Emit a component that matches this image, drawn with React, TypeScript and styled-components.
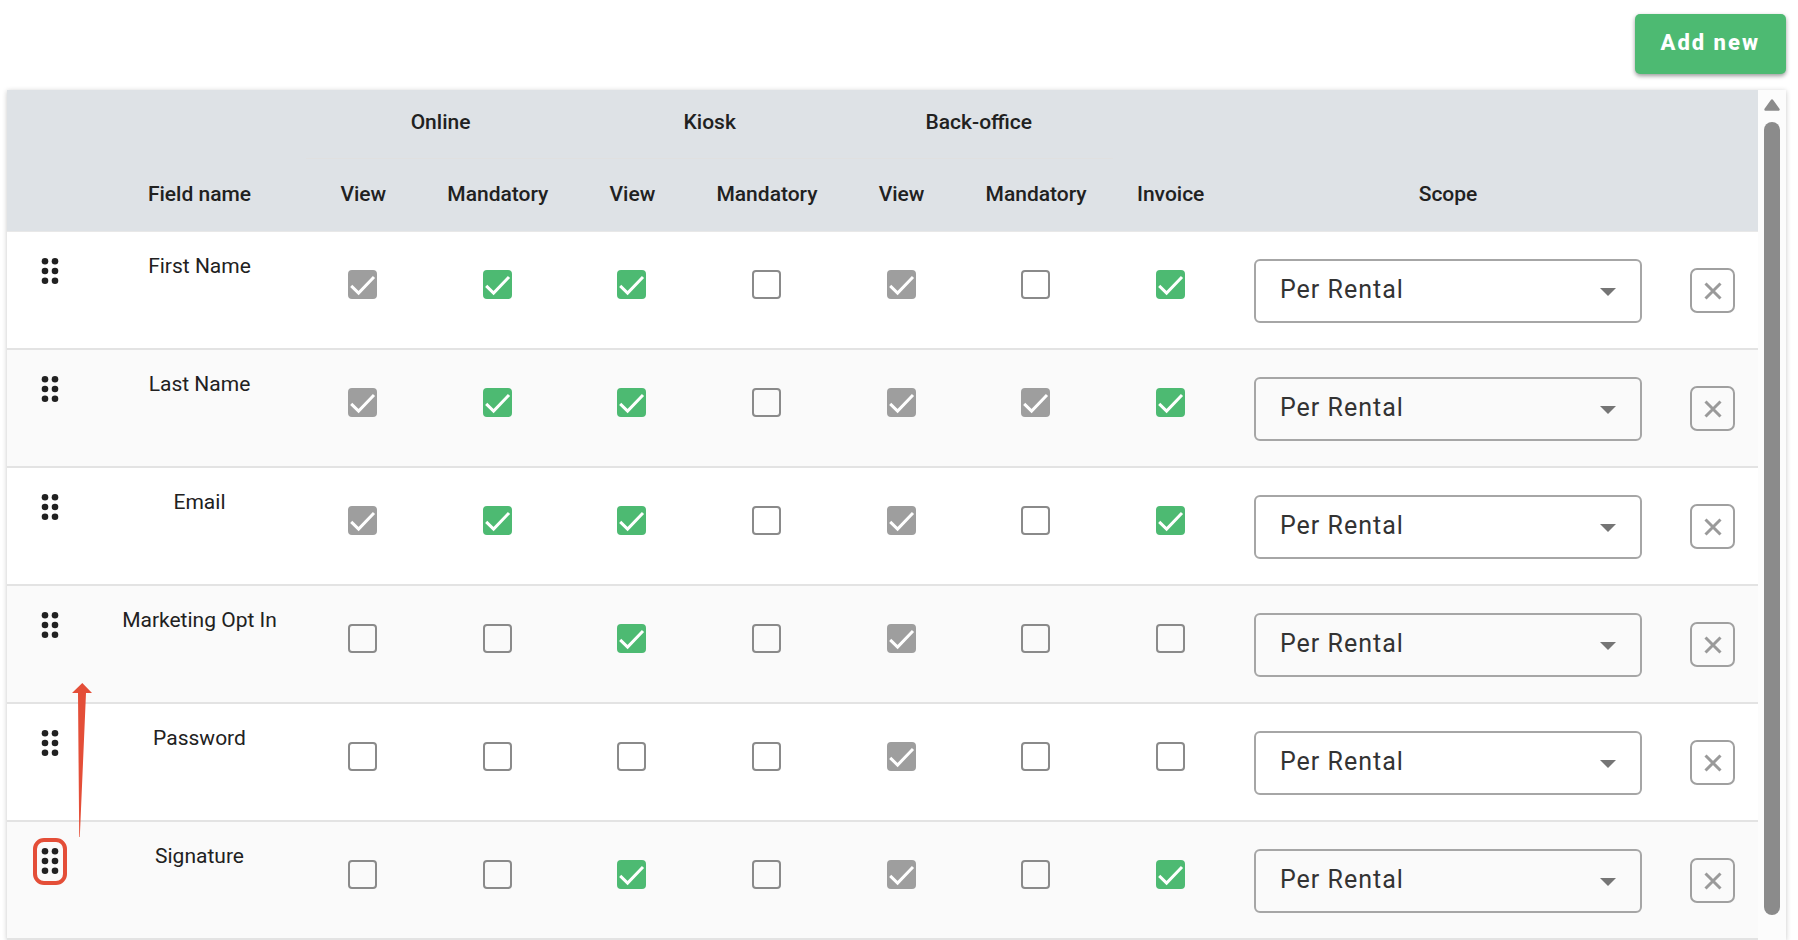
import React, { useState } from "react";
import styled, { createGlobalStyle } from "styled-components";

const GlobalStyle = createGlobalStyle`
  *, *::before, *::after { box-sizing: border-box; }
  body {
    margin: 0;
    background: #fff;
    color: #212121;
    font-family: Roboto, "Liberation Sans", sans-serif;
  }
`;

const Page = styled.main`
  display: flex;
  flex-direction: column;
  height: 100vh;
  overflow: hidden;
  padding: 14px 12px 0 7px;
`;

const Toolbar = styled.div`
  display: flex;
  justify-content: flex-end;
  flex: none;
  padding-bottom: 16px;
`;

const AddButton = styled.button`
  height: 60px;
  padding: 0 26px 2px;
  border: 0;
  border-radius: 5px;
  background: #4dba72;
  color: #fff;
  font: 800 22px/32px Roboto, sans-serif;
  letter-spacing: 2px;
  box-shadow: 0 2px 4px rgba(0, 0, 0, 0.4);
  cursor: pointer;
`;

const Card = styled.section`
  display: flex;
  flex: 1;
  min-height: 0;
  background: #fcfcfc;
  box-shadow: 0 1px 5px rgba(0, 0, 0, 0.22);
`;

const TableArea = styled.div`
  flex: 1;
  min-width: 0;
  overflow: hidden;
  background: #fff;
`;

const Table = styled.table`
  width: 100%;
  table-layout: fixed;
  border-collapse: separate;
  border-spacing: 0;
`;

const Col = styled.col<{ $w?: number }>`
  width: ${(p) => (p.$w ? `${p.$w}px` : "auto")};
`;

const GroupHead = styled.th<{ $line?: boolean }>`
  height: 69px;
  padding: 0 0 4px;
  background: #dee2e6;
  border-bottom: 1px solid ${(p) => (p.$line ? "#e0e0e0" : "#dee2e6")};
  font-size: 21px;
  line-height: 28px;
  font-weight: 500;
`;

const Head = styled.th`
  height: 73px;
  padding: 0 20px 2px 0;
  background: #dee2e6;
  border-bottom: 1px solid #e8e8e8;
  font-size: 21px;
  line-height: 28px;
  font-weight: 500;
`;

const Row = styled.tr`
  background: #fff;
  &:nth-child(even) { background: #fafafa; }
`;

const Cell = styled.td<{ $top: number; $left?: number; $right?: number }>`
  height: 118px;
  padding: ${(p) => `${p.$top}px ${p.$right ?? 0}px 0 ${p.$left ?? 0}px`};
  border-bottom: 2px solid #e3e3e3;
  vertical-align: top;
  text-align: center;
  font-size: 21px;
  line-height: 28px;
`;

const Handle = styled.button<{ $active?: boolean }>`
  position: relative;
  display: flex;
  align-items: center;
  justify-content: center;
  width: 34px;
  height: 47px;
  padding: 0 0 2px;
  border: 4px solid ${(p) => (p.$active ? "#e44e38" : "transparent")};
  border-radius: 11px;
  background: transparent;
  cursor: grab;
`;

const MoveArrow = styled.svg`
  position: absolute;
  left: 35px;
  top: -159px;
  pointer-events: none;
`;

const Tick = styled.label`
  position: relative;
  display: inline-block;
  width: 29px;
  height: 29px;
  vertical-align: top;
  svg { position: absolute; inset: 0; pointer-events: none; }
`;

const Box = styled.input`
  appearance: none;
  display: block;
  width: 29px;
  height: 29px;
  margin: 0;
  border: 2px solid #8a8a8a;
  border-radius: 4px;
  background: transparent;
  &:checked { border-color: #4dba72; background: #4dba72; }
  &:checked:disabled { border-color: #9e9e9e; background: #9e9e9e; }
`;

const SelectWrap = styled.div`
  position: relative;
  svg { position: absolute; right: 26px; top: 29px; pointer-events: none; }
`;

const ScopeSelect = styled.select`
  appearance: none;
  display: block;
  width: 100%;
  height: 64px;
  padding: 0 48px 2px 24px;
  border: 2px solid #a6a6a6;
  border-radius: 6px;
  background: transparent;
  color: #333;
  font: 400 25px/32px Roboto, sans-serif;
  letter-spacing: 1px;
`;

const RemoveButton = styled.button`
  display: inline-flex;
  align-items: center;
  justify-content: center;
  width: 45px;
  height: 45px;
  padding: 0;
  border: 2px solid #a0a0a0;
  border-radius: 7px;
  background: transparent;
  vertical-align: top;
`;

const ScrollTrack = styled.div`
  display: flex;
  flex-direction: column;
  align-items: center;
  flex: none;
  width: 28px;
  padding: 9px 0 25px;
  gap: 11px;
`;

const ScrollThumb = styled.div`
  flex: 1;
  width: 16px;
  border-radius: 8px;
  background: #8b8b8b;
`;

type Mark = "on" | "off" | "locked";

const columns = [
  "Online view", "Online mandatory", "Kiosk view", "Kiosk mandatory",
  "Back-office view", "Back-office mandatory", "Invoice",
];

const fields: { name: string; marks: Mark[]; moving?: boolean }[] = [
  { name: "First Name", marks: ["locked", "on", "on", "off", "locked", "off", "on"] },
  { name: "Last Name", marks: ["locked", "on", "on", "off", "locked", "locked", "on"] },
  { name: "Email", marks: ["locked", "on", "on", "off", "locked", "off", "on"] },
  { name: "Marketing Opt In", marks: ["off", "off", "on", "off", "locked", "off", "off"] },
  { name: "Password", marks: ["off", "off", "off", "off", "locked", "off", "off"] },
  { name: "Signature", marks: ["off", "off", "on", "off", "locked", "off", "on"], moving: true },
];

function CheckField({ mark, label }: { mark: Mark; label: string }) {
  const [checked, setChecked] = useState(mark !== "off");
  return (
    <Tick>
      <Box
        type="checkbox"
        aria-label={label}
        checked={checked}
        disabled={mark === "locked"}
        onChange={(e) => setChecked(e.target.checked)}
      />
      {checked && (
        <svg width="29" height="29" viewBox="0 0 29 29" aria-hidden="true">
          <path d="M3.2 15.8 10.6 23 26 7" fill="none" stroke="#fff" strokeWidth="3" />
        </svg>
      )}
    </Tick>
  );
}

function Dots() {
  return (
    <svg width="18" height="28" viewBox="0 0 18 28" fill="#212121" aria-hidden="true">
      {[4, 14].map((x) => [4.3, 14, 23.7].map((y) => <circle key={`${x}-${y}`} cx={x} cy={y} r="3.3" />))}
    </svg>
  );
}

export default function App() {
  return (
    <>
      <GlobalStyle />
      <Page>
        <Toolbar>
          <AddButton type="button">Add new</AddButton>
        </Toolbar>
        <Card>
          <TableArea>
            <Table>
              <colgroup>
                <Col $w={106} />
                <Col $w={193} />
                {columns.map((c) => <Col key={c} />)}
                <Col $w={420} />
                <Col $w={90} />
              </colgroup>
              <thead>
                <tr>
                  <GroupHead colSpan={2} />
                  <GroupHead $line colSpan={2} scope="colgroup">Online</GroupHead>
                  <GroupHead $line colSpan={2} scope="colgroup">Kiosk</GroupHead>
                  <GroupHead $line colSpan={2} scope="colgroup">Back-office</GroupHead>
                  <GroupHead colSpan={3} />
                </tr>
                <tr>
                  <Head />
                  <Head scope="col">Field name</Head>
                  <Head scope="col">View</Head>
                  <Head scope="col">Mandatory</Head>
                  <Head scope="col">View</Head>
                  <Head scope="col">Mandatory</Head>
                  <Head scope="col">View</Head>
                  <Head scope="col">Mandatory</Head>
                  <Head scope="col">Invoice</Head>
                  <Head scope="col">Scope</Head>
                  <Head />
                </tr>
              </thead>
              <tbody>
                {fields.map((f) => (
                  <Row key={f.name}>
                    <Cell $top={16} $left={26}>
                      <Handle type="button" $active={f.moving} aria-label={`Move ${f.name}`}>
                        <Dots />
                        {f.moving && (
                          <MoveArrow width="20" height="154" viewBox="0 0 20 154" aria-hidden="true">
                            <path d="M10.3 0 20 10H14L7.8 154H7.2L6 10H0Z" fill="#e44e38" />
                          </MoveArrow>
                        )}
                      </Handle>
                    </Cell>
                    <Cell $top={20} $right={20}>{f.name}</Cell>
                    {f.marks.map((m, i) => (
                      <Cell key={columns[i]} $top={38} $right={21}>
                        <CheckField mark={m} label={`${f.name}: ${columns[i]}`} />
                      </Cell>
                    ))}
                    <Cell $top={27} $left={6} $right={26}>
                      <SelectWrap>
                        <ScopeSelect aria-label={`${f.name}: scope`} defaultValue="rental">
                          <option value="rental">Per Rental</option>
                        </ScopeSelect>
                        <svg width="16" height="8" viewBox="0 0 16 8" aria-hidden="true">
                          <path d="M0 0H16L8 8Z" fill="#757575" />
                        </svg>
                      </SelectWrap>
                    </Cell>
                    <Cell $top={36} $right={1}>
                      <RemoveButton type="button" aria-label={`Remove ${f.name}`}>
                        <svg width="18" height="18" viewBox="0 0 18 18" aria-hidden="true">
                          <path d="M1.5 1.5 16.5 16.5M16.5 1.5 1.5 16.5" stroke="#9a9a9a" strokeWidth="3" />
                        </svg>
                      </RemoveButton>
                    </Cell>
                  </Row>
                ))}
              </tbody>
            </Table>
          </TableArea>
          <ScrollTrack aria-hidden="true">
            <svg width="16" height="12" viewBox="0 0 16 12">
              <path d="M8 1.5 14.5 10.5H1.5Z" fill="#8b8b8b" stroke="#8b8b8b" strokeWidth="2.4" strokeLinejoin="round" />
            </svg>
            <ScrollThumb />
          </ScrollTrack>
        </Card>
      </Page>
    </>
  );
}
